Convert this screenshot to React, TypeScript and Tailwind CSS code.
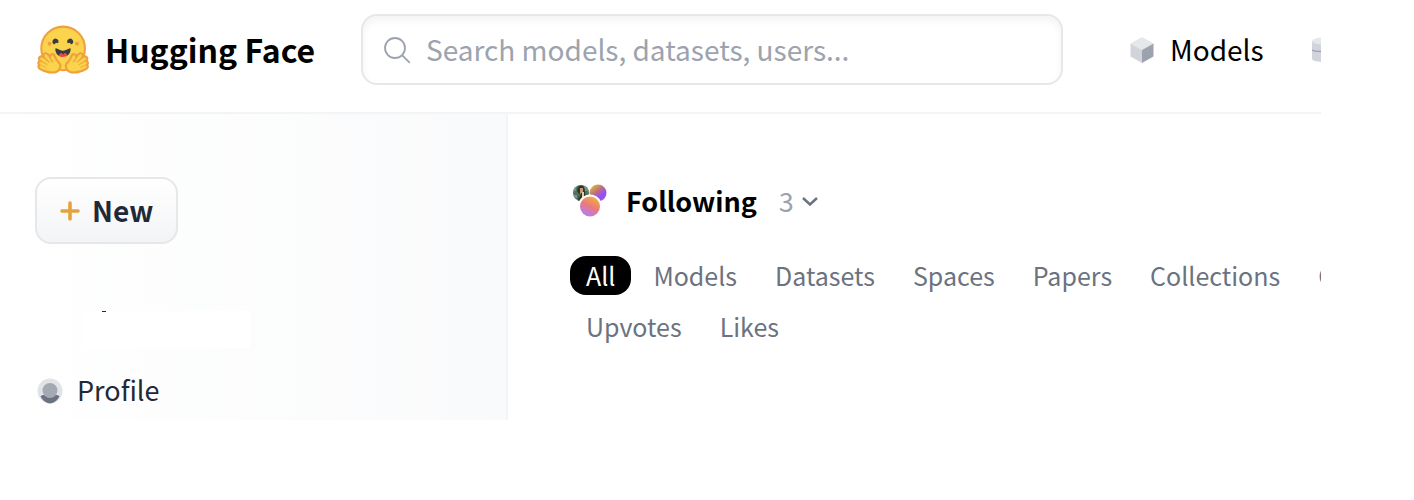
import React from "react";

const firstTabs = ["All", "Models", "Datasets", "Spaces", "Papers", "Collections", "Community"];
const secondTabs = ["Upvotes", "Likes"];

function Hand() {
  return (
    <>
      <path
        fill="#F0A03C"
        d="M17.52 48c-1.62 0-3.06.66-4.07 1.87a5.97 5.97 0 0 0-1.33 3.76 7.1 7.1 0 0 0-1.94-.3c-1.55 0-2.95.59-3.94 1.66a5.8 5.8 0 0 0-.8 7 5.3 5.3 0 0 0-1.79 2.82c-.24.9-.48 2.8.8 4.74a5.22 5.22 0 0 0-.37 5.02c1.02 2.32 3.57 4.14 8.52 6.1 3.07 1.22 5.89 2 5.91 2.01a44.33 44.33 0 0 0 10.93 1.6c5.86 0 10.05-1.8 12.46-5.34 3.88-5.69 3.33-10.9-1.7-15.92-2.77-2.78-4.62-6.87-5-7.77-.78-2.66-2.84-5.62-6.25-5.62a5.7 5.7 0 0 0-4.6 2.46c-1-1.26-1.98-2.25-2.86-2.82A7.4 7.4 0 0 0 17.52 48Z"
      />
      <path
        fill="#F9D44C"
        stroke="#F9D44C"
        strokeWidth="0.8"
        d="M38.6 76.69c2.75-4.04 2.55-7.07-1.22-10.84-3.78-3.77-5.98-9.3-5.98-9.3s-.82-3.2-2.69-2.9c-1.87.3-3.24 5.08.68 8.01 3.91 2.93-.78 4.92-2.29 2.17-1.5-2.75-5.62-9.82-7.76-11.18-2.13-1.35-3.63-.6-3.13 2.2.5 2.79 9.43 9.55 8.56 11-.87 1.47-3.93-1.71-3.93-1.71s-9.57-8.71-11.66-6.44c-2.08 2.27 1.59 4.17 6.8 7.33 5.23 3.16 5.64 4 4.9 5.2-.75 1.2-12.28-8.53-13.36-4.4-1.08 4.11 11.77 5.3 10.98 8.15-.8 2.85-9.06-5.38-10.74-2.18-1.7 3.21 11.65 6.98 11.76 7.01 4.3 1.12 15.25 3.49 19.08-2.12Z"
      />
    </>
  );
}

function Logo() {
  return (
    <svg className="h-[49px] w-[52px] shrink-0" viewBox="3 2 88 83" aria-hidden="true">
      <circle cx="47.21" cy="41.75" r="37" fill="#F9D44C" stroke="#F0A03C" strokeWidth="3.4" />
      <path
        fill="#3A3B45"
        d="M58.5 32.3c1.28.44 1.78 3.06 3.07 2.38a5 5 0 1 0-6.76-2.07c.61 1.15 2.55-.72 3.7-.32ZM34.95 32.3c-1.28.44-1.79 3.06-3.07 2.38a5 5 0 1 1 6.76-2.07c-.61 1.15-2.56-.72-3.7-.32Z"
      />
      <path fill="#EB4545" d="M39.43 54a8.7 8.7 0 0 1 5.3-4.49h4.900a8.610 8.610 0 0 1 5.200 4.290c-4 3.200-11.200 3.200-15.400.2Z" />
      <path
        fill="#3A3B45"
        d="M39.43 54a8.7 8.7 0 0 1 5.3-4.49c.4-.12.81.57 1.24 1.28.4.68.82 1.37 1.24 1.37.45 0 .9-.68 1.33-1.35.45-.7.89-1.38 1.32-1.25a8.61 8.61 0 0 1 5 4.17c3.73-2.94 5.1-7.74 5.1-10.7 0-2.34-1.57-1.6-4.09-.36l-.14.07c-2.31 1.15-5.39 2.67-8.77 2.67s-6.45-1.52-8.77-2.67c-2.6-1.29-4.23-2.1-4.23.29 0 3.05 1.46 8.06 5.47 10.97Z"
      />
      <circle cx="70.71" cy="33.75" r="3.25" fill="#F0A03C" />
      <circle cx="24.21" cy="33.75" r="3.25" fill="#F0A03C" />
      <Hand />
      <g transform="matrix(-1 0 0 1 94.42 0)">
        <Hand />
      </g>
    </svg>
  );
}

function FollowingIcon() {
  return (
    <svg className="h-[34px] w-[36px] shrink-0" viewBox="0 0 36 34" aria-hidden="true">
      <defs>
        <linearGradient id="orb-top" x1="0.2" y1="0.1" x2="0.75" y2="0.8">
          <stop offset="0" stopColor="#dfae3c" />
          <stop offset="0.45" stopColor="#b96e83" />
          <stop offset="0.8" stopColor="#9850f0" />
        </linearGradient>
        <linearGradient id="orb-bottom" x1="0.8" y1="0.15" x2="0.35" y2="1">
          <stop offset="0" stopColor="#f0a64a" />
          <stop offset="0.45" stopColor="#e97a7c" />
          <stop offset="1" stopColor="#b57cf6" />
        </linearGradient>
        <clipPath id="avatar">
          <circle cx="9" cy="9" r="8" />
        </clipPath>
      </defs>
      <g clipPath="url(#avatar)">
        <path fill="#4e7563" d="M0 0h18v18H0Z" />
        <path fill="#77947f" d="M0 3h4v4H0ZM12 2h5v5h-5ZM2 11h3v3H2Z" />
        <path fill="#30342b" d="M6 3c3-3 7-1 7 4l1 10H6L7 10 5 7Z" />
        <path fill="#c39a75" d="M8 4h3v5H9l-2 5 1-5Z" />
        <path fill="#ddd0ac" d="M10 8h2v6h-2Z" />
      </g>
      <circle cx="26" cy="9" r="8.5" fill="url(#orb-top)" />
      <circle cx="18" cy="22.5" r="12" fill="#fff" />
      <circle cx="18" cy="22.5" r="10" fill="url(#orb-bottom)" />
    </svg>
  );
}

function Tab({ label, active }: { label: string; active?: boolean }) {
  return (
    <button
      type="button"
      className={
        active
          ? "flex h-[39px] shrink-0 items-center rounded-2xl bg-black px-4 text-white"
          : "flex h-[39px] shrink-0 items-center rounded-2xl px-4 text-[#6b7280]"
      }
    >
      {label}
    </button>
  );
}

export default function App() {
  return (
    <div className="overflow-hidden bg-white pr-[93px] font-['Noto_Sans_CJK_SC','Noto_Sans',sans-serif] text-black">
      <header className="flex items-center overflow-hidden border-b-2 border-[#f3f4f6] pt-3.5 pb-[27px] pl-[37px]">
        <a href="#" className="flex w-[324px] shrink-0 items-center gap-4 text-[32px] leading-10 font-bold">
          <Logo />
          <span className="pb-0.5 whitespace-nowrap">Hugging Face</span>
        </a>
        <label className="flex h-[71px] min-w-0 flex-1 items-center gap-[15px] rounded-2xl border-2 border-[#e5e7eb] px-5 shadow-[inset_0_4px_8px_rgba(0,0,0,0.05)]">
          <svg className="size-7 shrink-0" viewBox="0 0 28 28" fill="none" stroke="#9ca3af" strokeWidth="1.8" aria-hidden="true">
            <circle cx="12" cy="12" r="10" />
            <path d="m19.3 19.3 7.5 7.5" />
          </svg>
          <input
            type="text"
            aria-label="Search"
            placeholder="Search models, datasets, users..."
            className="h-10 min-w-0 flex-1 bg-transparent pb-0.5 text-[28px] outline-none placeholder:text-[#9ca3af]"
          />
        </label>
        <nav className="flex w-[258px] shrink-0 items-center gap-12 overflow-hidden pl-[67px] text-[28px] leading-10">
          <a href="#" className="flex shrink-0 items-center gap-4">
            <svg className="h-[26px] w-6" viewBox="0 0 24 26" aria-hidden="true">
              <path fill="#e5e7eb" d="m12 0 11.5 6.5L12 13 .5 6.5Z" />
              <path fill="#d1d5db" d="M.5 6.5 12 13v13L.5 19.5Z" />
              <path fill="#9ca3af" d="M23.5 6.5 12 13v13l11.5-6.5Z" />
            </svg>
            <span className="pb-0.5">Models</span>
          </a>
          <a href="#" aria-label="Datasets" className="shrink-0">
            <svg className="h-[26px] w-6" viewBox="0 0 24 26" aria-hidden="true">
              <path fill="#d1d5db" d="M0 4v18c0 4 24 4 24 0V4Z" />
              <path fill="none" stroke="#9ca3af" strokeWidth="1.5" d="M0 13c3 2 21 2 24 0" />
              <ellipse cx="12" cy="4" rx="12" ry="3.5" fill="#e5e7eb" />
            </svg>
          </a>
        </nav>
      </header>

      <div className="flex">
        <aside className="flex h-[306px] w-[508px] shrink-0 flex-col items-start border-r-2 border-[#f3f4f6] bg-linear-to-r from-white to-[#f9fafb] pt-[63px]">
          <button
            type="button"
            className="ml-[35px] flex h-[67px] items-center gap-3 rounded-2xl border-2 border-[#e5e7eb] bg-linear-to-b from-white to-[#f3f4f6] px-[23px] text-[28px] leading-10 font-bold text-[#1f2937]"
          >
            <svg className="size-5" viewBox="0 0 20 20" stroke="#e6a23c" strokeWidth="3.6" strokeLinecap="round" aria-hidden="true">
              <path d="M10 2v16M2 10h16" />
            </svg>
            <span className="pb-0.5">New</span>
          </button>
          <div className="mt-[67px] ml-[84px] h-[37px] w-[166px] bg-white pl-[18px]">
            <div className="h-px w-1 bg-[#1f2937]" />
          </div>
          <a href="#" className="mt-[22px] ml-[37px] flex items-center gap-[14px] text-[27px] leading-10 text-[#1f2937]">
            <svg className="size-[26px]" viewBox="0 0 26 26" aria-hidden="true">
              <circle cx="13" cy="13" r="12.5" fill="#e1e3e7" />
              <path fill="#6b7280" d="M3.5 18.2C5 17 9 16 13 16s8 1 9.5 2.2A12.5 12.5 0 0 1 13 25.5 12.5 12.5 0 0 1 3.5 18.2Z" />
              <circle cx="13" cy="12.5" r="7.5" fill="#a5a9b3" />
            </svg>
            <span className="pb-0.5">Profile</span>
          </a>
        </aside>

        <main className="min-w-0 flex-1 overflow-hidden pt-[67px] pl-[62px]">
          <div className="flex items-center pl-0.5 leading-10">
            <FollowingIcon />
            <h2 className="ml-[18px] text-[27px] font-bold">Following</h2>
            <button type="button" className="ml-[22px] flex items-center gap-2 text-[27px] text-[#9ca3af]">
              3
              <svg className="h-[9px] w-4" viewBox="0 0 16 9" fill="none" stroke="#6b7280" strokeWidth="2.5" aria-hidden="true">
                <path d="m1 1 7 6.5L15 1" />
              </svg>
            </button>
          </div>
          <div className="mt-[35px] flex flex-col gap-3 text-[25px]">
            <div className="flex gap-1.5">
              {firstTabs.map((tab) => (
                <Tab key={tab} label={tab} active={tab === "All"} />
              ))}
            </div>
            <div className="flex gap-1.5">
              {secondTabs.map((tab) => (
                <Tab key={tab} label={tab} />
              ))}
            </div>
          </div>
        </main>
      </div>
    </div>
  );
}
